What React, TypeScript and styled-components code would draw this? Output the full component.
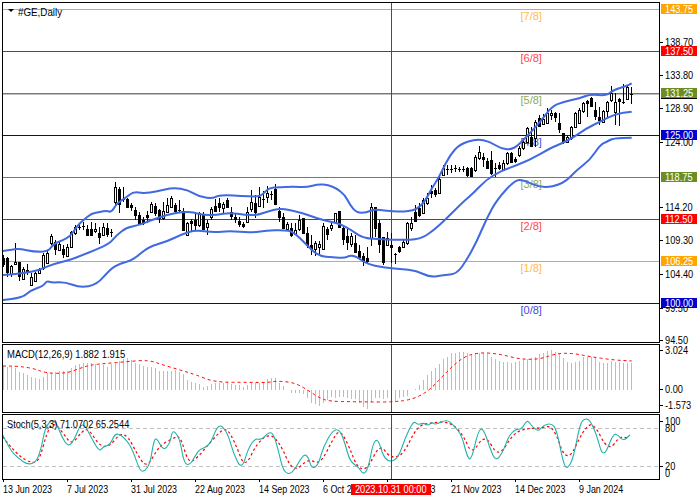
import React from "react";
import styled, { createGlobalStyle } from "styled-components";

const FONT = '"Liberation Sans", Arial, sans-serif';

const Global = createGlobalStyle`
  html, body { margin: 0; padding: 0; background: #fff; }
  body { width: 700px; height: 500px; overflow: hidden; font-family: ${FONT}; }
`;

const Page = styled.main`
  width: 700px;
  height: 500px;
  box-sizing: border-box;
  padding: 2px 0 0 2px;
  display: flex;
  flex-direction: column;
  gap: 1px;
  color: #000;
  font: 11px/12px ${FONT};
`;
const Pane = styled.section<{ $h: number }>`
  display: flex;
  height: ${(p) => p.$h}px;
  flex: none;
`;
const Plot = styled.div`
  position: relative;
  width: 658px;
  flex: none;
  box-sizing: border-box;
  border: 1px solid #000;
`;
const Canvas = styled.svg`
  display: block;
  position: absolute;
  left: 0;
  top: 0;
`;
const Squeeze = styled.span<{ $k?: number }>`
  display: inline-block;
  white-space: nowrap;
  transform: scaleX(${(p) => p.$k ?? 0.84});
  transform-origin: 0 50%;
`;
const Legend = styled.div`
  position: absolute;
  left: 4px;
  top: 3px;
  white-space: nowrap;
`;
const SymbolLegend = styled(Legend)`
  left: 15px;
  top: 3px;
`;
const Caret = styled.span`
  position: absolute;
  left: -10px;
  top: 3px;
  border-left: 3px solid transparent;
  border-right: 3px solid transparent;
  border-top: 3px solid #000;
`;
const Axis = styled.div`
  position: relative;
  flex: 1;
`;
const AxisTick = styled.div`
  position: absolute;
  left: 0;
  height: 12px;
  padding-left: 5px;
  line-height: 12px;
  white-space: nowrap;
  &::before {
    content: "";
    position: absolute;
    left: 0;
    top: 6px;
    width: 3px;
    height: 1px;
    background: #000;
  }
`;
const BareTick = styled(AxisTick)`
  &::before { display: none; }
`;
const LevelTag = styled.div<{ $c: string }>`
  position: absolute;
  left: 1px;
  width: 36px;
  height: 10px;
  line-height: 11px;
  background: ${(p) => p.$c};
  color: #fff;
  padding-left: 4px;
  box-sizing: border-box;
  overflow: hidden;
  &[data-under] { box-shadow: 0 1px 0 #000; }
`;
const TimeAxis = styled.footer`
  position: relative;
  display: flex;
  padding-left: 1px;
`;
const TimeTick = styled.div`
  position: relative;
  flex: none;
  width: 64px;
  padding-top: 2px;
  white-space: nowrap;
  line-height: 12px;
  &::before {
    content: "";
    position: absolute;
    left: 0;
    top: -2px;
    width: 1px;
    height: 3px;
    background: #000;
  }
`;
const CrossDate = styled.div`
  position: absolute;
  left: 349px;
  top: 3px;
  width: 80px;
  height: 11px;
  padding-left: 4px;
  box-sizing: border-box;
  line-height: 11px;
  background: #f00;
  color: #fff;
  white-space: nowrap;
`;

type P = [number, number];
const z3 = (a: P[]) => a.map(([x, y]) => [x / 3, 170 + y / 3] as P);
const z4 = (a: P[]) => a.map(([x, y]) => [350 + x / 3, 170 + y / 3] as P);
const z2 = (a: P[]) => a.map(([x, y]) => [350 + x / 3, y / 3] as P);
const m5 = (a: P[]) => a.map(([x, y]) => [x / 3, 340 + y / 3] as P);
const m6 = (a: P[]) => a.map(([x, y]) => [350 + x / 3, 340 + y / 3] as P);
const f = (n: number) => n.toFixed(1);
const smooth = (a: P[]) => {
  let d = `M${f(a[0][0])} ${f(a[0][1])}`;
  for (let i = 1; i < a.length - 1; i++) {
    const mx = (a[i][0] + a[i + 1][0]) / 2, my = (a[i][1] + a[i + 1][1]) / 2;
    d += `Q${f(a[i][0])} ${f(a[i][1])} ${f(mx)} ${f(my)}`;
  }
  const l = a[a.length - 1];
  return d + `L${f(l[0])} ${f(l[1])}`;
};

const upper = [
  ...z3([[8,243],[40,238],[60,236],[100,245],[145,245],[160,222],[185,212],[210,200],[230,170],[250,150],[275,130],[300,126],[320,122],[335,127],[350,100],[375,85],[400,65],[430,70],[470,65],[520,52],[565,60],[600,82],[640,85],[650,78],[680,75],[720,78],[775,80],[790,72],[805,55],[830,52],[880,50],[920,52],[955,42],[985,45],[1010,55],[1035,75],[1050,105]]),
  ...z4([[20,128],[50,128],[70,118],[110,122],[150,125],[175,124],[200,118],[225,95],[245,55],[262,30],[275,5]]),
  ...z2([[300,465],[330,432],[380,417],[420,425],[450,445],[490,450],[530,410],[575,360],[605,320],[640,305],[690,295],[720,283],[770,287],[790,270],[830,258],[845,250]]),
];
const middle = [
  ...z3([[8,315],[50,312],[100,305],[130,295],[160,282],[210,270],[240,258],[290,238],[330,220],[350,195],[380,172],[420,165],[460,148],[500,135],[550,125],[580,127],[610,135],[650,135],[690,128],[735,135],[775,135],[800,125],[840,115],[870,120],[910,130],[950,145],[990,155],[1020,162],[1050,178]]),
  ...z4([[40,205],[100,208],[150,210],[210,208],[250,182],[290,145],[340,95],[370,70],[410,28],[450,5]]),
  ...z2([[470,507],[540,480],[600,445],[640,428],[670,412],[710,385],[750,365],[795,342],[845,335]]),
];
const lower = [
  ...z3([[8,390],[65,385],[90,362],[130,348],[140,333],[155,338],[195,336],[240,353],[290,345],[330,298],[360,280],[400,270],[445,230],[500,215],[545,193],[585,180],[640,187],[690,183],[750,188],[800,182],[850,180],[880,185],[920,225],[955,258],[1000,262],[1035,264],[1050,256]]),
  ...z4([[20,260],[50,282],[100,292],[150,297],[200,302],[240,322],[280,315],[320,312],[350,270],[380,215],[410,145],[440,90],[495,30],[520,30],[575,55],[640,42],[680,0]]),
  ...z2([[720,480],[750,435],[770,425],[790,415],[845,413]]),
];

// [bodyTop, bodyBottom, high, low, white]
type C = [number, number, number, number, number];
const cA: C[] = [[263,283,255,290,0],[265,305,262,320,0],[288,312,285,320,1],[275,283,220,285,1],[277,318,275,332,0],[298,328,290,330,1],[300,305,283,315,0],[322,345,310,348,1],[310,332,305,332,1],[300,308,295,312,1],[255,295,250,300,1],[248,278,240,280,1],[198,220,192,225,1],[215,238,210,255,0],[222,240,212,243,1],[238,252,225,263,0],[232,258,222,260,1],[186,230,182,232,1],[170,190,165,195,1],[170,175,160,180,0],[168,172,155,180,0],[176,195,165,198,0],[176,195,155,198,0],[176,184,160,190,1],[190,200,170,222,0],[172,195,160,198,1],[174,192,160,200,0],[185,190,178,200,0],[52,95,37,105,1],[58,103,50,128,0],[88,88,52,95,0],[87,110,85,115,0],[105,112,100,122,0],[120,135,112,150,0],[135,158,125,162,0],[150,158,140,165,0],[136,140,122,158,0],[102,126,97,130,1],[108,130,100,138,0],[120,145,118,158,0],[124,145,95,150,1],[105,126,85,130,1],[85,110,78,112,1],[105,122,100,130,0],[120,124,90,130,0],[122,180,115,182,0],[160,196,155,198,1],[152,158,148,182,0],[150,165,130,182,0],[130,165,125,170,1],[135,176,125,180,0],[160,172,150,195,1],[118,140,110,150,1],[108,122,88,125,0],[98,112,85,125,0],[102,115,95,128,1],[90,112,85,115,0],[125,138,112,150,0],[142,148,130,158,0],[153,162,140,172,0],[162,167,155,173,0],[125,155,110,158,1],[97,118,60,125,1],[100,125,75,145,0],[82,108,50,112,1],[88,88,62,115,0],[68,82,48,100,1],[72,72,62,90,0],[58,102,42,104,0],[123,140,110,155,0],[140,175,130,178,0],[163,178,155,180,1],[175,195,160,202,0],[180,192,160,195,1],[150,178,135,182,1],[145,190,143,192,0],[190,225,172,235,0],[225,238,195,255,0],[218,236,212,258,1],[222,230,212,255,1],[168,238,160,240,1],[178,192,172,210,0],[165,175,155,182,1],[130,155,128,158,1],[124,170,122,172,0],[175,208,170,225,0],[198,215,178,240,0]];
const cB: C[] = [[197,223,190,230,1],[218,245,195,250,0],[242,262,225,270,0],[258,272,250,288,0],[265,272,232,278,0],[112,205,100,228,1],[112,175,112,200,0],[160,222,150,250,0],[202,275,200,285,0],[205,225,185,228,1],[224,230,190,278,0],[252,256,250,282,0],[232,243,228,248,0],[217,232,210,235,1],[160,218,155,225,1],[160,175,140,182,1],[125,152,105,155,0],[115,135,100,140,0],[90,130,85,133,1],[85,100,70,105,1],[62,70,45,85,0],[60,72,55,82,0],[28,68,20,72,1]];
const cC: C[] = [[505,525,495,528,1],[508,508,495,525,0],[508,508,496,520,0],[505,505,496,515,0],[506,506,500,515,0],[507,507,498,515,0],[505,525,500,530,0],[505,528,500,530,0],[470,510,465,515,1],[455,475,438,480,1],[470,478,458,500,0],[483,505,475,508,0],[480,520,452,525,0],[505,505,490,530,0],[495,505,485,510,0],[490,510,480,512,1],[458,490,455,495,1],[458,485,455,490,0],[478,483,470,490,0],[445,465,438,470,1],[425,445,415,450,1],[385,425,380,430,1],[410,438,380,442,0],[365,415,360,440,1],[355,378,345,382,0],[358,372,342,375,1],[340,368,325,370,1],[338,345,330,360,1],[340,352,335,365,0],[368,388,340,400,0],[400,425,398,432,0],[412,425,408,425,1],[380,415,378,420,1],[340,380,335,385,1],[330,368,325,372,1],[310,332,305,340,1],[303,310,300,350,0],[293,318,290,322,0],[330,348,305,360,0],[350,360,322,375,0],[333,365,330,370,1],[305,332,302,350,1],[280,300,258,305,1],[305,337,280,375,1],[297,303,295,377,0],[305,305,252,312,0],[262,297,255,300,1],[281,281,262,312,0]];
const conv = (v: number, off: number) => off + v / 3;
const candles: C[] = [
  ...cA.map((c) => [conv(c[0],170),conv(c[1],170),conv(c[2],170),conv(c[3],170),c[4]] as C),
  ...cB.map((c) => [conv(c[0],170),conv(c[1],170),conv(c[2],170),conv(c[3],170),c[4]] as C),
  ...cC.map((c) => [conv(c[0],0),conv(c[1],0),conv(c[2],0),conv(c[3],0),c[4]] as C),
];

const hist = [
  ...[78,82,82,85,95,100,105,112,115,118,112,100,98,95,92,92,92,85,75,72,70,70,70,72,75,75,80,72,68,62,58,55,60,68,72,78,80,82,85,92,93,92,92,90,97,102,120,125,130,132,140,138,132,130,130,130,130,132,135,135,140,135,130,128,128,125,118,115,113,128,138,150,158,160,160,163,175,190,193,198,190,180,172,175,170,170,175],
  ...[178,178,188,200,207,185,175,175,178,175,185,185,175,172,168,150,148,135,120,105,92,85,72,58,50,40,38,36,36,40,42,40,38,38,42,50,58,62,65,65,68,65,62,60,58,55,50,42,38,33,30,35,42,55,65,68,65,62,52,50,50,55,65,68,68,63,65,66,68,68,68],
].map((v) => 340 + v / 3);

const macdSignal = [
  ...m5([[8,78],[50,78],[100,85],[140,100],[200,100],[240,85],[270,75],[320,70],[380,65],[445,60],[490,75],[540,90],[590,105],[645,127],[750,127],[800,128],[830,123],[880,127],[920,148],[960,175],[990,184],[1050,185]]),
  ...m6([[60,186],[130,186],[190,178],[240,150],[290,95],[340,50],[390,37],[450,42],[510,58],[570,58],[620,40],[670,40],[720,50],[790,60],[845,63]]),
];
const stochMain = [
  ...m5([[8,285],[30,330],[55,355],[85,375],[110,365],[125,320],[135,265],[155,238],[170,250],[185,290],[205,322],[225,295],[240,255],[255,255],[275,295],[298,335],[310,320],[330,315],[345,280],[365,285],[395,320],[420,395],[435,393],[450,370],[460,310],[468,290],[490,333],[510,310],[516,275],[525,275],[540,300],[552,370],[570,376],[590,340],[600,328],[630,315],[650,262],[665,255],[685,285],[700,340],[725,390],[745,325],[765,295],[785,300],[805,277],[820,280],[835,330],[850,395],[875,405],[910,342],[925,350],[935,387],[955,375],[970,320],[1000,268],[1020,270],[1035,310],[1050,365]]),
  ...m6([[25,380],[40,405],[55,385],[70,305],[85,298],[100,350],[120,367],[145,353],[165,295],[190,242],[205,255],[220,248],[235,258],[245,245],[255,255],[290,238],[310,255],[335,285],[350,345],[363,365],[385,270],[400,265],[420,325],[437,365],[460,335],[475,290],[495,268],[515,268],[532,238],[545,258],[565,275],[580,255],[605,250],[620,270],[640,370],[652,388],[670,355],[690,250],[705,235],[720,240],[740,285],[760,358],[790,280],[805,285],[820,303],[840,285]]),
];
const stochSignal = [
  ...m5([[8,290],[50,345],[100,372],[120,355],[140,280],[160,245],[190,280],[215,315],[245,275],[265,265],[300,320],[330,318],[360,280],[385,290],[410,340],[440,385],[470,330],[490,310],[520,295],[540,285],[565,370],[590,355],[620,320],[650,285],[680,260],[710,320],[735,385],[770,310],[810,280],[840,310],[880,400],[925,355],[960,375],[1000,295],[1020,268],[1050,325]]),
  ...m6([[20,380],[50,392],[90,310],[120,355],[160,345],[200,260],[240,248],[300,245],[340,285],[365,345],[405,280],[445,355],[490,280],[530,265],[570,265],[610,255],[650,375],[700,270],[730,245],[775,335],[810,288],[835,295]]),
];

const ORANGE = "#FFA500", RED = "#F00", OLIVE = "#6B8E23", BLUE = "#0000CD";
const levels = [
  { y: 9, c: ORANGE, price: "143.75", tag: "[7/8]" },
  { y: 51, c: RED, price: "137.50", tag: "[6/8]" },
  { y: 93, c: OLIVE, price: "131.25", tag: "[5/8]" },
  { y: 135, c: BLUE, price: "125.00", tag: "[4/8]" },
  { y: 177, c: OLIVE, price: "118.75", tag: "[3/8]" },
  { y: 219, c: RED, price: "112.50", tag: "[2/8]" },
  { y: 261, c: ORANGE, price: "106.25", tag: "[1/8]" },
  { y: 303, c: BLUE, price: "100.00", tag: "[0/8]" },
];
const priceTicks: [string, number][] = [["138.70",42],["133.80",75],["128.90",108],["124.00",142],["114.20",207],["109.30",240],["104.40",274],["99.50",308],["94.50",340]];
const dates = ["13 Jun 2023","7 Jul 2023","31 Jul 2023","22 Aug 2023","14 Sep 2023","6 Oct 2023","30 Oct 2023","21 Nov 2023","14 Dec 2023","9 Jan 2024"];

const Candle = ({ i, c }: { i: number; c: C }) => {
  const x = 3.5 + 4 * i;
  const t = Math.round(c[0]), b = Math.round(c[1]);
  return (
    <g shapeRendering="crispEdges">
      <line x1={x} x2={x} y1={Math.round(c[2])} y2={Math.round(c[3])} stroke="#000" />
      {b - t < 2 ? (
        <line x1={x - 1.5} x2={x + 1.5} y1={t + 0.5} y2={t + 0.5} stroke="#000" />
      ) : (
        <rect x={x - 1} y={t + 0.5} width={2} height={b - t} fill={c[4] ? "#fff" : "#000"} stroke="#000" />
      )}
    </g>
  );
};

const PANE_W = 658;
const CrossV = () => <line x1={391.5} x2={391.5} y1={0} y2={500} stroke="#f00" shapeRendering="crispEdges" />;

export default function App() {
  return (
    <>
      <Global />
      <Page>
        <Pane $h={341}>
          <Plot>
            <Canvas width={PANE_W - 2} height={339} viewBox="3 3 656 339">
              {levels.map((l) => (
                <text key={l.tag} x={520.5} y={l.y + 11} fontFamily="Liberation Sans" fontSize="11" fill={l.c} opacity={0.75}>{l.tag}</text>
              ))}
              <line x1={3} x2={659} y1={94.5} y2={94.5} stroke="#C0C0C0" shapeRendering="crispEdges" />
              {levels.map((l) => (
                <line key={l.y} x1={3} x2={659} y1={l.y + 0.5} y2={l.y + 0.5} stroke={l.c} shapeRendering="crispEdges" />
              ))}
              <CrossV />
              {candles.map((c, i) => <Candle key={i} i={i} c={c} />)}
              {[upper, middle, lower].map((b, i) => (
                <path key={i} d={smooth(b)} fill="none" stroke="#4169E1" strokeWidth={2} strokeLinejoin="round" />
              ))}
            </Canvas>
            <SymbolLegend><Caret /><Squeeze $k={0.89}>#GE,Daily</Squeeze></SymbolLegend>
          </Plot>
          <Axis>
            {priceTicks.map(([t, y]) => <AxisTick key={t} style={{ top: y - 8 }}><Squeeze>{t}</Squeeze></AxisTick>)}
            {levels.map((l) => (
              <LevelTag key={l.price} $c={l.c} data-under={l.price === "131.25" ? "" : undefined} style={{ top: l.y - 7 }}><Squeeze>{l.price}</Squeeze></LevelTag>
            ))}
          </Axis>
        </Pane>
        <Pane $h={69}>
          <Plot>
            <Canvas width={PANE_W - 2} height={67} viewBox="3 345 656 67">
              {hist.map((y, i) => {
                const x = 3.5 + 4 * i;
                return <line key={i} x1={x} x2={x} y1={390} y2={Math.round(y)} stroke="#BDBDBD" strokeWidth={1} shapeRendering="crispEdges" />;
              })}
              <path d={smooth(macdSignal)} fill="none" stroke="#f00" strokeDasharray="3 3" />
              <CrossV />
            </Canvas>
            <Legend><Squeeze $k={0.86}>MACD(12,26,9) 1.882 1.915</Squeeze></Legend>
          </Plot>
          <Axis>
            <AxisTick style={{ top: 0 }}><Squeeze>3.024</Squeeze></AxisTick>
            <AxisTick style={{ top: 39 }}><Squeeze>0.00</Squeeze></AxisTick>
            <AxisTick style={{ top: 55 }}><Squeeze>-1.573</Squeeze></AxisTick>
          </Axis>
        </Pane>
        <Pane $h={66}>
          <Plot>
            <Canvas width={PANE_W - 2} height={64} viewBox="3 415 656 64">
              <line x1={3} x2={659} y1={428.5} y2={428.5} stroke="#C0C0C0" strokeDasharray="4 3" shapeRendering="crispEdges" />
              <line x1={3} x2={659} y1={466.5} y2={466.5} stroke="#C0C0C0" strokeDasharray="4 3" shapeRendering="crispEdges" />
              <path d={smooth(stochSignal)} fill="none" stroke="#f00" strokeWidth={1.2} strokeDasharray="2.5 2.5" />
              <path d={smooth(stochMain)} fill="none" stroke="#20B2AA" strokeWidth={1.1} />
              <CrossV />
            </Canvas>
            <Legend><Squeeze $k={0.84}>Stoch(5,3,3) 71.0702 65.2544</Squeeze></Legend>
          </Plot>
          <Axis>
            <AxisTick style={{ top: 1 }}><Squeeze>100</Squeeze></AxisTick>
            <BareTick style={{ top: 8 }}><Squeeze>80</Squeeze></BareTick>
            <AxisTick style={{ top: 46 }}><Squeeze>20</Squeeze></AxisTick>
            <BareTick style={{ top: 53 }}><Squeeze>0</Squeeze></BareTick>
          </Axis>
        </Pane>
        <TimeAxis>
          {dates.map((d) => <TimeTick key={d}><Squeeze $k={0.81}>{d}</Squeeze></TimeTick>)}
          <CrossDate><Squeeze $k={0.835}>2023.10.31 00:00</Squeeze></CrossDate>
        </TimeAxis>
      </Page>
    </>
  );
}
